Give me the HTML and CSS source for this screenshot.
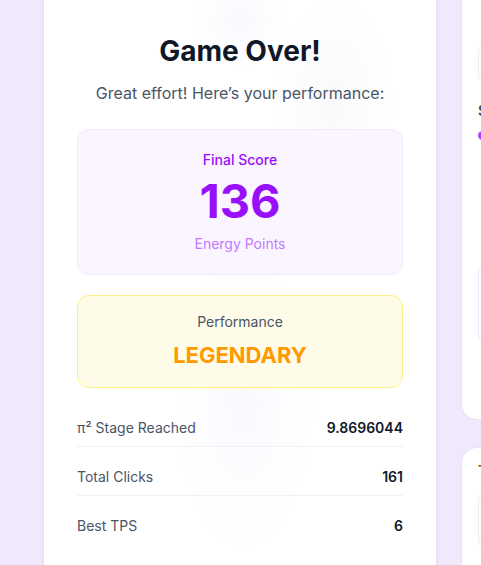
FILE: index.html
```html
<!DOCTYPE html>
<html lang="en">
<head>
    <meta charset="UTF-8">
    <meta name="viewport" content="width=device-width, initial-scale=1.0">
    <title>Game Over</title>
    <link rel="stylesheet" href="styles.css">
</head>
<body>
    <div class="page">
        <section class="modal">
            <h1 class="title">Game Over!</h1>
            <p class="subtitle">Great effort! Here’s your performance:</p>

            <div class="score-box">
                <div class="score-label">Final Score</div>
                <div class="score-value">136</div>
                <div class="score-unit">Energy Points</div>
            </div>

            <div class="rank-box">
                <div class="rank-label">Performance</div>
                <div class="rank-value">LEGENDARY</div>
            </div>

            <div class="stats">
                <div class="stat"><span>π² Stage Reached</span><strong>9.8696044</strong></div>
                <div class="stat"><span>Total Clicks</span><strong>161</strong></div>
                <div class="stat"><span>Best TPS</span><strong>6</strong></div>
            </div>
        </section>

        <aside class="side">
            <div class="panel panel-top">
                <div class="mini-box"></div>
                <div class="mini-text">S</div>
                <div class="mini-dot"></div>
                <div class="mini-box mini-box-purple"></div>
            </div>
            <div class="panel panel-bottom">
                <div class="mini-text mini-text-warm">T</div>
                <div class="mini-box mini-box-tall"></div>
            </div>
        </aside>
    </div>
</body>
</html>
```

FILE: styles.css
```css
body {
    margin: 0;
    padding: 0;
    background-color: #f0e8fd;
    font-family: Inter, "Noto Sans", sans-serif;
    color: #101828;
    overflow: hidden;
}
.page {
    display: flex;
    gap: 24px;
    height: 565px;
    padding-left: 43px;
}
.modal {
    flex: 0 0 394px;
    box-sizing: border-box;
    margin-top: -20px;
    height: 620px;
    padding: 52px 33px 0;
    background-color: #ffffff;
    background-image:
        radial-gradient(circle at 196px 40px, rgba(236, 241, 250, 0.4) 0, rgba(255, 255, 255, 0) 45px),
        radial-gradient(ellipse at 290px 120px, rgba(240, 240, 247, 0.35) 0, rgba(255, 255, 255, 0) 60px),
        radial-gradient(ellipse at 200px 420px, rgba(246, 242, 253, 0.5) 0, rgba(255, 255, 255, 0) 70px);
    border: 1px solid #e7e1f2;
    border-radius: 16px;
    box-shadow: 0 0 3px rgba(120, 100, 160, 0.15);
    text-align: center;
}
.title {
    margin: 0 0 12px;
    font-size: 28px;
    line-height: 36px;
    font-weight: 700;
    color: #101828;
}
.subtitle {
    margin: 0 0 24px;
    font-size: 16px;
    line-height: 24px;
    color: #4a5565;
}
.score-box {
    padding: 20px;
    background-color: #faf5ff;
    border: 1px solid #f3e8ff;
    border-radius: 12px;
}
.score-label {
    font-size: 14px;
    line-height: 20px;
    font-weight: 500;
    color: #9810fa;
    margin-bottom: 7px;
}
.score-value {
    font-size: 47px;
    line-height: 48px;
    font-weight: 700;
    color: #9810fa;
    margin-bottom: 9px;
}
.score-unit {
    font-size: 14px;
    line-height: 20px;
    color: #c27aff;
}
.rank-box {
    margin-top: 20px;
    padding: 16px;
    background-color: #fefce8;
    border: 1px solid #fff085;
    border-radius: 12px;
}
.rank-label {
    font-size: 14px;
    line-height: 20px;
    color: #4a5565;
}
.rank-value {
    margin-top: 7px;
    font-size: 22px;
    line-height: 32px;
    font-weight: 700;
    color: #fe9a00;
}
.stats {
    margin-top: 22px;
    display: flex;
    flex-direction: column;
    gap: 12px;
}
.stat {
    display: flex;
    justify-content: space-between;
    padding: 8px 0;
    font-size: 14px;
    line-height: 20px;
    border-bottom: 1px solid #f0f1f3;
}
.stat:last-child {
    border-bottom: none;
}
.stat span {
    color: #4a5565;
}
.stat strong {
    font-weight: 600;
    color: #101828;
}
.side {
    flex: 0 0 80px;
    display: flex;
    flex-direction: column;
    gap: 27px;
}
.panel {
    box-sizing: border-box;
    padding-left: 16px;
    background-color: #ffffff;
    border: 1px solid #e9e3f4;
    border-right: none;
    border-radius: 16px 0 0 16px;
}
.panel-top {
    margin-top: -20px;
    height: 440px;
    padding-top: 61px;
}
.panel-bottom {
    flex: 1;
    padding-top: 13px;
    border-bottom: none;
    border-radius: 16px 0 0 0;
}
.mini-box {
    height: 40px;
    border: 1px solid #eeeef2;
    border-right: none;
    border-radius: 10px 0 0 10px;
    background-color: #fcfcfd;
}
.mini-text {
    margin-top: 17px;
    font-size: 14px;
    line-height: 20px;
    font-weight: 600;
    color: #364153;
    white-space: nowrap;
}
.mini-text-warm {
    margin-top: 0;
    color: #8a3a10;
}
.mini-dot {
    margin-top: 10px;
    width: 9px;
    height: 9px;
    border-radius: 50%;
    background-color: #ad46ff;
}
.mini-box-purple {
    margin-top: 122px;
    height: 80px;
    border-color: #f1e8fd;
    background-color: #fdfbff;
}
.mini-box-tall {
    margin-top: 10px;
    height: 56px;
}
```
